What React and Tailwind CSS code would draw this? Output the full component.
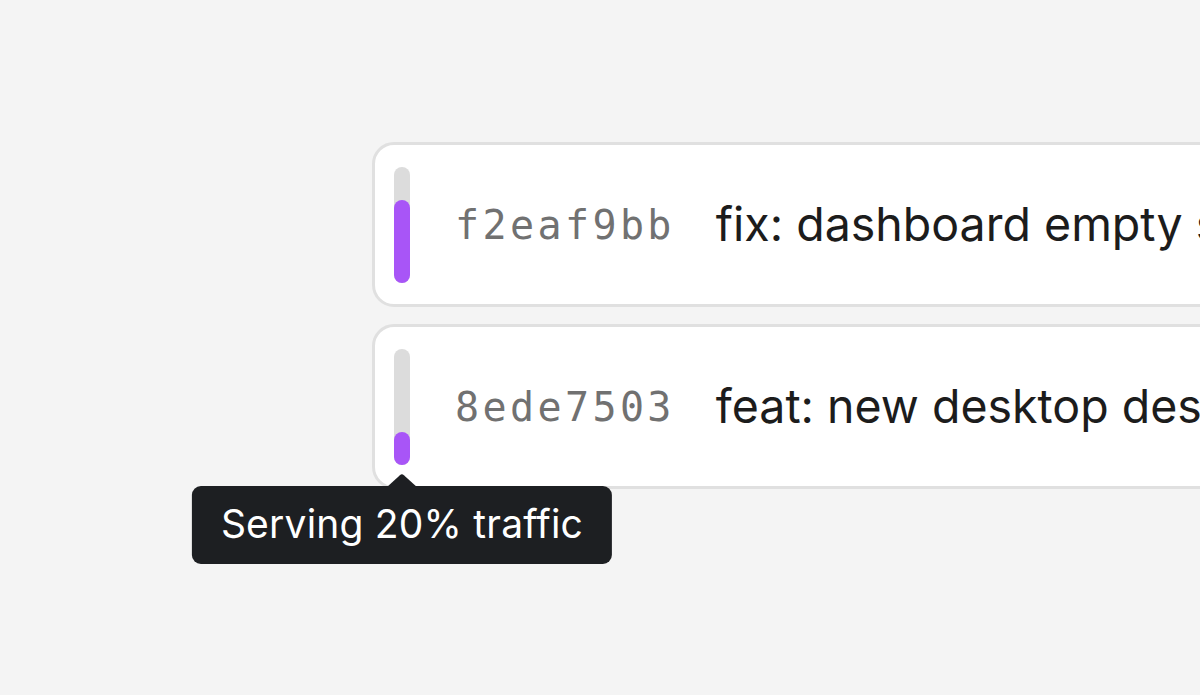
import React from "react";

const commits = [
    { hash: "f2eaf9bb", message: "fix: dashboard empty state for new projects", fill: 83 },
    { hash: "8ede7503", message: "feat: new desktop design for deployments", fill: 33, tooltip: "Serving 20% traffic" },
];

function TrafficBar({ fill, tooltip }) {
    return (
        <div className="relative h-[116px] w-4 shrink-0 rounded-full bg-[#dcdcdc] flex flex-col justify-end">
            <div className="w-4 rounded-full bg-[#a855f7]" style={{ height: fill }} />
            {tooltip && (
                <div className="absolute left-1/2 top-[137px] -translate-x-1/2 z-10">
                    {/* arrow */}
                    <svg
                        className="absolute left-1/2 -top-[12px] -translate-x-1/2"
                        width="30"
                        height="13"
                        viewBox="0 0 30 13"
                    >
                        <path d="M0 13 L13 1.2 Q15 -0.6 17 1.2 L30 13 Z" fill="#1d1f22" />
                    </svg>
                    <div className="whitespace-nowrap rounded-[9px] bg-[#1d1f22] px-[29px] h-[78px] flex items-center text-[39px] text-white font-['Inter',sans-serif] tracking-[0.2px]">
                        {tooltip}
                    </div>
                </div>
            )}
        </div>
    );
}

export default function App() {
    return (
        <div className="h-[695px] w-[1200px] overflow-hidden bg-[#f4f4f4] pl-[372px] pt-[142px]">
            <div className="flex flex-col gap-[17px] w-[1100px]">
                {commits.map((c) => (
                    <div
                        key={c.hash}
                        className="flex h-[165px] items-center rounded-[22px] border-[3px] border-[#e0e0e0] bg-white pl-[19px]"
                    >
                        <TrafficBar fill={c.fill} tooltip={c.tooltip} />
                        <span className="ml-[45px] font-['DejaVu_Sans_Mono',monospace] text-[40px] tracking-[3.4px] text-[#717171]">
                            {c.hash}
                        </span>
                        <span className="ml-[41px] whitespace-nowrap font-['Inter',sans-serif] text-[46.5px] text-[#1c1c1c]">
                            {c.message}
                        </span>
                    </div>
                ))}
            </div>
        </div>
    );
}
